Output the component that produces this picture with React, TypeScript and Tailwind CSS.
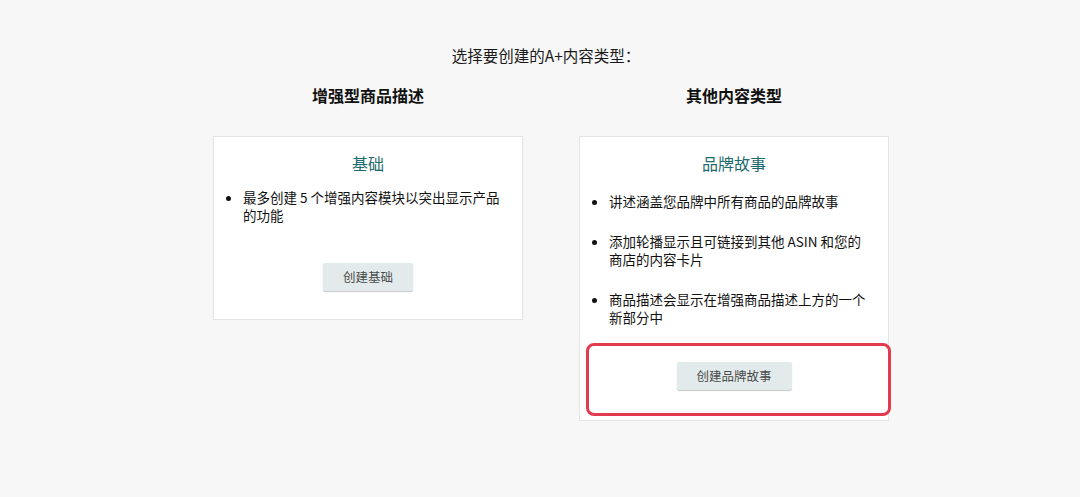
const FONT = "font-['Noto_Sans_CJK_SC','Noto_Sans',sans-serif]"

function CreateButton({ label, className = '' }: { label: string; className?: string }) {
  return (
    <button
      type="button"
      className={`h-[28px] rounded-[2px] bg-[#e2eaeb] text-[12.5px] text-[#4a4a4a] shadow-[0_1px_1px_rgba(0,0,0,0.22)] ${className}`}
    >
      {label}
    </button>
  )
}

export default function App() {
  return (
    <div className={`min-h-[497px] w-full bg-[#f7f7f7] text-[#111] ${FONT}`}>
      <div className="flex flex-col items-center">
        <p className="mt-[44px] pl-[12px] text-[15.5px] leading-[22px] text-[#1a1a1a]">选择要创建的A+内容类型：</p>

        <div className="mt-[17px] grid grid-cols-[310px_310px] items-start gap-x-[56px] pl-[22px]">
          <h2 className="text-center text-[16px] font-bold leading-[24px]">增强型商品描述</h2>
          <h2 className="text-center text-[16px] font-bold leading-[24px]">其他内容类型</h2>

          {/* basic module card */}
          <div className="mt-[29px] border border-[#e4e4e4] bg-white px-[16px] pt-[14px] pb-[28px]">
            <h3 className="text-center text-[16px] leading-[24px] text-[#1e6a6c]">基础</h3>
            <ul className="mt-[13px] list-disc pl-[13px] pr-[4px] text-[13.5px] leading-[18px]">
              <li>最多创建 5 个增强内容模块以突出显示产品的功能</li>
            </ul>
            <div className="mt-[39px] flex justify-center">
              <CreateButton label="创建基础" className="w-[90px]" />
            </div>
          </div>

          {/* brand story card */}
          <div className="relative mt-[29px] border border-[#e4e4e4] bg-white px-[16px] pt-[14px] pb-[30px]">
            <h3 className="text-center text-[16px] leading-[24px] text-[#1e6a6c]">品牌故事</h3>
            <ul className="mt-[17px] flex list-disc flex-col gap-[22px] pl-[13px] pr-[4px] text-[13.5px] leading-[18px]">
              <li>讲述涵盖您品牌中所有商品的品牌故事</li>
              <li>添加轮播显示且可链接到其他 ASIN 和您的商店的内容卡片</li>
              <li>商品描述会显示在增强商品描述上方的一个新部分中</li>
            </ul>
            <div className="mt-[36px] flex justify-center">
              <CreateButton label="创建品牌故事" className="w-[115px]" />
            </div>
            <div className="pointer-events-none absolute left-[6px] right-[-3px] bottom-[4px] h-[73px] rounded-[8px] border-[3px] border-[#e23a4e]" />
          </div>
        </div>
      </div>
    </div>
  )
}
